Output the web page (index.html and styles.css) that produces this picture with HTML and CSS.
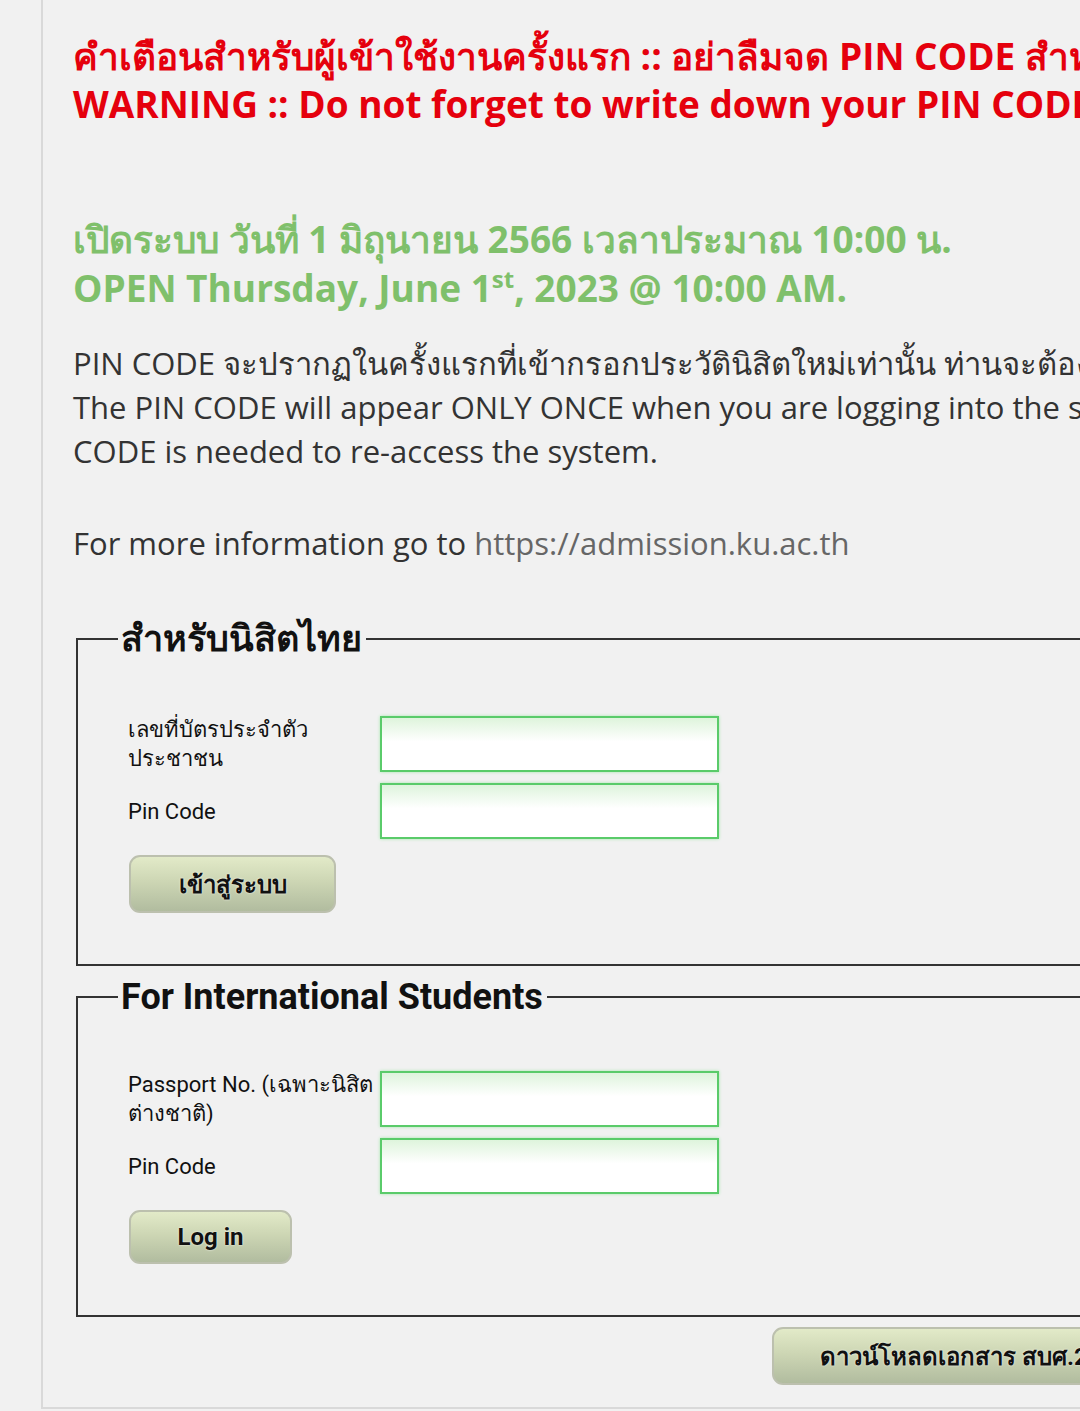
FILE: index.html
```html
<!DOCTYPE html>
<html lang="th">
<head>
<meta charset="utf-8">
<title>KU Admission</title>
<link rel="stylesheet" href="styles.css">
</head>
<body>
<div class="outer">
  <div class="page">
    <h2 class="warn">
      <span class="line">คำเตือนสำหรับผู้เข้าใช้งานครั้งแรก :: อย่าลืมจด PIN CODE สำหรับเข้าใช้งานครั้งต่อไป</span>
      <span class="line">WARNING :: Do not forget to write down your PIN CODE for next login</span>
    </h2>
    <h2 class="open">
      <span class="line">เปิดระบบ วันที่ 1 มิถุนายน 2566 เวลาประมาณ 10:00 น.</span>
      <span class="line">OPEN Thursday, June 1<sup>st</sup>, 2023 @ 10:00 AM.</span>
    </h2>
    <p class="info">
      <span class="line">PIN CODE จะปรากฏในครั้งแรกที่เข้ากรอกประวัตินิสิตใหม่เท่านั้น ท่านจะต้องกรอก PIN CODE ทุกครั้งที่เข้าสู่ระบบ</span>
      <span class="line">The PIN CODE will appear ONLY ONCE when you are logging into the system for the first time. The PIN</span>
      <span class="line">CODE is needed to re-access the system.</span>
      <span class="line blank">&nbsp;</span>
      <span class="line">For more information go to <a href="#">https://admission.ku.ac.th</a></span>
    </p>

    <fieldset class="box">
      <legend>สำหรับนิสิตไทย</legend>
      <div class="form">
        <label class="lbl" for="cid">เลขที่บัตรประจำตัว<br>ประชาชน</label>
        <input class="inp" id="cid" type="text">
        <label class="lbl" for="pin1">Pin Code</label>
        <input class="inp" id="pin1" type="password">
      </div>
      <button class="btn btn-th" type="button">เข้าสู่ระบบ</button>
    </fieldset>

    <fieldset class="box box2">
      <legend>For International Students</legend>
      <div class="form">
        <label class="lbl" for="pp">Passport No. (เฉพาะนิสิต<br>ต่างชาติ)</label>
        <input class="inp" id="pp" type="text">
        <label class="lbl" for="pin2">Pin Code</label>
        <input class="inp" id="pin2" type="password">
      </div>
      <button class="btn btn-en" type="button">Log in</button>
    </fieldset>

    <div class="dl-row">
      <button class="btn btn-dl" type="button">ดาวน์โหลดเอกสาร สบศ.2 (สำหรับนิสิตใหม่)</button>
    </div>
  </div>
</div>
</body>
</html>
```

FILE: styles.css
```css
html, body {
  margin: 0;
  padding: 0;
  background: #f1f1f1;
  overflow: hidden;
}

.outer {
  width: 1800px;
  padding-left: 41px;
}

.page {
  border-left: 2px solid #d9d9d9;
  border-bottom: 2px solid #d9d9d9;
  padding: 32px 0 22px 30px;
  width: 1700px;
  font-family: "Open Sans", "Noto Sans", sans-serif;
  color: #333;
}

.line {
  display: block;
  white-space: nowrap;
}

.warn {
  margin: 0;
  font-size: 37px;
  line-height: 48px;
  font-weight: 700;
  color: #e5000d;
}

.open {
  margin: 86px 0 0 0;
  font-size: 37px;
  line-height: 49px;
  font-weight: 700;
  color: #7fc06b;
}

.open sup {
  font-size: 24px;
  line-height: 0;
  vertical-align: 14px;
}

.info {
  margin: 29px 0 0 0;
  font-size: 31px;
  line-height: 44px;
  color: #333;
}

.info .blank {
  height: 48px;
}

.info a {
  color: #666;
  text-decoration: none;
}

.box {
  width: 1300px;
  margin: 45px 0 0 3px;
  padding: 48px 0 51px 50px;
  border: 2px solid #333;
  font-family: Roboto, "Noto Sans", sans-serif;
  color: #111;
}

.box2 {
  margin-top: 10px;
  padding-top: 52px;
}

.box legend {
  font-size: 36px;
  font-weight: 700;
  color: #111;
  padding: 0 4px 0 3px;
  margin-left: -10px;
}

.form {
  display: grid;
  grid-template-columns: 252px 339px;
  row-gap: 10px;
  align-items: center;
}

.lbl {
  font-size: 22px;
  line-height: 29px;
  color: #111;
}

.inp {
  box-sizing: border-box;
  width: 339px;
  height: 56px;
  margin: 0;
  border: 2px solid #5acb6a;
  box-shadow: 0 0 3px #a6e8ae;
  background: linear-gradient(#def4dc 0%, #ffffff 45%, #ffffff 100%);
  outline: none;
}

.btn {
  display: block;
  box-sizing: border-box;
  height: 58px;
  margin: 16px 0 0 1px;
  border: 2px solid #bcc0ae;
  border-radius: 11px;
  background: linear-gradient(#e2eac8 0%, #cdd6b4 45%, #b1bc9f 100%);
  font-family: Roboto, "Noto Sans", sans-serif;
  font-size: 24px;
  font-weight: 700;
  color: #111;
  text-shadow: 0 0 2px #fff;
  cursor: pointer;
}

.btn-th {
  width: 207px;
}

.btn-en {
  width: 163px;
  height: 54px;
}

.dl-row {
  display: flex;
  margin-top: 10px;
  padding-left: 699px;
}

.btn-dl {
  margin: 0;
  padding: 0 46px;
  width: auto;
  white-space: nowrap;
}
```
